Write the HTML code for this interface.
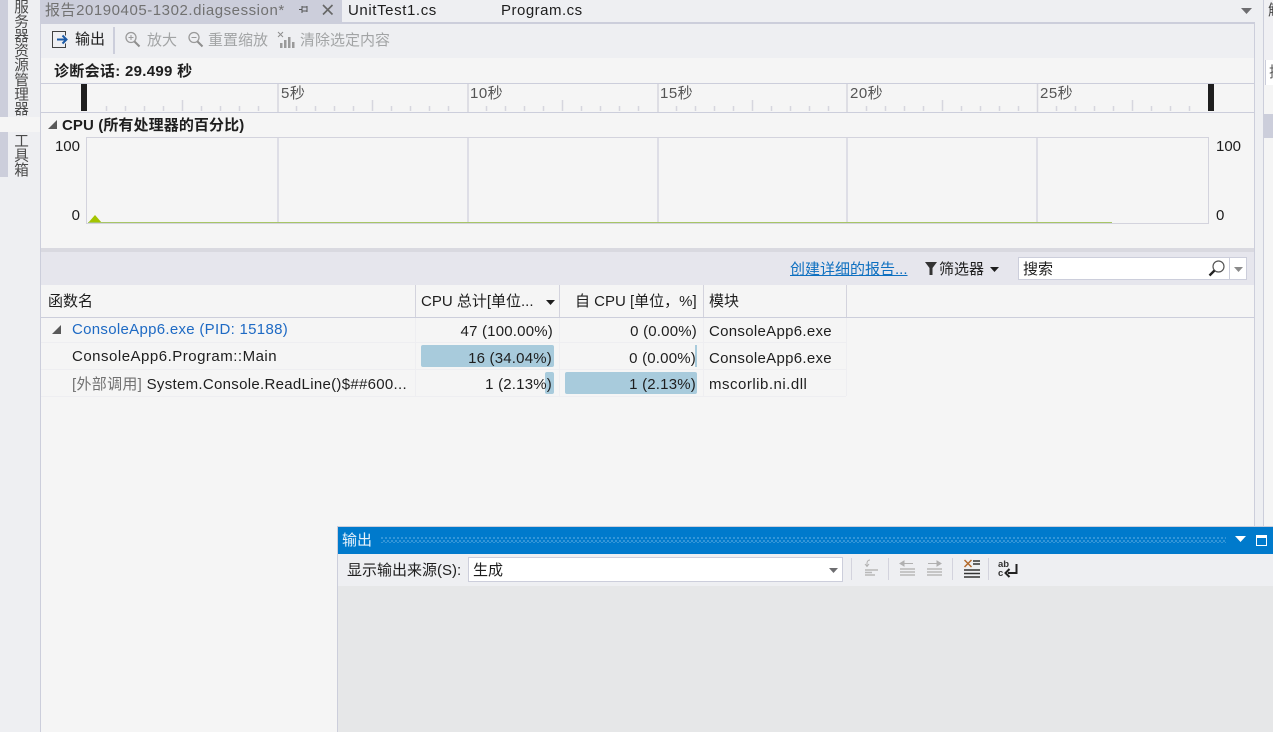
<!DOCTYPE html>
<html><head><meta charset="utf-8">
<style>
html,body{margin:0;padding:0;width:1273px;height:732px;overflow:hidden;background:#f5f5f5}
body{position:relative;font-family:"Liberation Sans","Noto Sans CJK SC",sans-serif;font-size:15px;color:#1e1e1e}
.a{position:absolute}
.t{position:absolute;white-space:nowrap;line-height:20px;height:20px}
.r{text-align:right}
.g{color:#a2a4a5}
.s{letter-spacing:.3px}
.m{letter-spacing:.5px}
.bar{position:absolute;background:#a8cbdc;border-radius:2px}
.v{position:absolute;writing-mode:vertical-rl;white-space:nowrap;color:#4a4a4a;font-size:14.600px;line-height:16px}
.gl{position:absolute;top:138px;width:2px;height:85px;background:#dedee6}
.sp{position:absolute;top:558px;width:1px;height:22px;background:#d3d3dd}
svg{position:absolute;overflow:visible}
</style></head><body>
<!-- left sidebar -->
<div class="a" style="left:0;top:0;width:40px;height:732px;background:#eeeff2"></div>
<div class="a" style="left:0;top:0;width:8px;height:117px;background:#cccedb"></div>
<div class="a" style="left:0;top:132px;width:8px;height:45px;background:#cccedb"></div>
<div class="a" style="left:0;top:117px;width:40px;height:15px;background:#f5f5f5"></div>
<div class="v" style="left:12px;top:-1px">服务器资源管理器</div>
<div class="v" style="left:12px;top:133px">工具箱</div>
<div class="a" style="left:40px;top:0;width:1px;height:732px;background:#cccedb"></div>

<!-- tab row -->
<div class="a" style="left:41px;top:0;width:1222px;height:23px;background:#eeeff2"></div>
<div class="a" style="left:41px;top:0;width:301px;height:23px;background:#cccedb"></div>
<div class="t" style="left:45px;top:1px;color:#717171;letter-spacing:.55px">报告20190405-1302.diagsession*</div>
<svg style="left:298px;top:4px" width="14" height="12"><path d="M4 2v7M4 3h5v4H4M1 5.500h3M9 2v6" stroke="#555" stroke-width="1" fill="none"/></svg>
<svg style="left:322px;top:4px" width="12" height="12"><path d="M1 1l9.500 9.500M10.500 1L1 10.500" stroke="#666" stroke-width="1.600" fill="none"/></svg>
<div class="t" style="left:348px;top:1px;letter-spacing:.6px">UnitTest1.cs</div>
<div class="t" style="left:501px;top:1px;letter-spacing:.5px">Program.cs</div>
<svg style="left:1241px;top:8px" width="11" height="6"><path d="M0 0h11L5.500 6z" fill="#6d6d70"/></svg>

<!-- document body -->
<div class="a" style="left:41px;top:22px;width:1214px;height:2px;background:#cccedb"></div>
<div class="a" style="left:1254px;top:22px;width:1px;height:710px;background:#cccedb"></div>
<div class="a" style="left:1255px;top:0;width:8px;height:732px;background:#eeeff2"></div>
<div class="a" style="left:1263px;top:0;width:1px;height:732px;background:#cccedb"></div>
<div class="a" style="left:1264px;top:0;width:9px;height:732px;background:#f5f5f5"></div>
<div class="a" style="left:1264px;top:0;width:9px;height:60px;background:#f0f0f3"></div>
<div class="a" style="left:1265px;top:60px;width:8px;height:25px;background:#fff;border-left:1px solid #cccedb;box-sizing:border-box"></div>
<div class="a" style="left:1264px;top:114px;width:9px;height:24px;background:#cccedb"></div>
<div class="t" style="left:1268px;top:1px;color:#444">解</div>
<div class="t" style="left:1269px;top:63px;color:#555">搜</div>
<div class="a" style="left:41px;top:24px;width:1213px;height:34px;background:#eeeff2"></div>

<!-- toolbar -->
<svg style="left:52px;top:31px" width="18" height="18"><path d="M13.500 12.500v4H.5v-16h13v4" stroke="#424242" fill="none"/><path d="M5 8.500h9M10.500 4.500l4 4-4 4" stroke="#1c5aa6" stroke-width="2" fill="none"/></svg>
<div class="t" style="left:75px;top:30px">输出</div>
<div class="a" style="left:113px;top:27px;width:2px;height:27px;background:#cccedb"></div>
<svg style="left:124px;top:31px" width="17" height="17"><circle cx="7" cy="6.500" r="5" stroke="#9a9a9a" fill="none" stroke-width="1.300"/><path d="M10.500 10.500l5 5" stroke="#8e8e8e" stroke-width="2"/><path d="M4.500 6.500h5M7 4v5" stroke="#9a9a9a"/></svg>
<div class="t g" style="left:147px;top:31px">放大</div>
<svg style="left:187px;top:31px" width="17" height="17"><circle cx="7" cy="6.500" r="5" stroke="#9a9a9a" fill="none" stroke-width="1.300"/><path d="M10.500 10.500l5 5" stroke="#8e8e8e" stroke-width="2"/><path d="M4.500 6.500h5" stroke="#9a9a9a"/></svg>
<div class="t g" style="left:208px;top:31px">重置缩放</div>
<svg style="left:277px;top:31px" width="18" height="18"><path d="M1 1l5 5M6 1L1 6" stroke="#8e8e8e"/><path d="M3 12h2.500v5H3zM7 9h2.500v8H7zM11 6h2.500v11H11zM15 11h2.500v6H15z" fill="#9a9a9a"/></svg>
<div class="t g" style="left:300px;top:31px">清除选定内容</div>

<!-- session -->
<div class="t s" style="left:54px;top:62px;font-weight:bold">诊断会话: 29.499 秒</div>

<!-- ruler -->
<div class="a" style="left:41px;top:83px;width:1213px;height:1px;background:#cccedb"></div>
<div class="a" style="left:41px;top:112px;width:1213px;height:1px;background:#cccedb"></div>
<svg style="left:0;top:0" width="1273" height="120">
<path stroke="#d6d6de" stroke-width="1.500" fill="none" d="M106.500 106v5M125.500 106v5M144.500 106v5M163.500 106v5M182.500 100v11M201.500 106v5M220.500 106v5M239.500 106v5M258.500 106v5M278 84v28
M296.500 106v5M315.500 106v5M334.500 106v5M353.500 106v5M372.500 100v11M391.500 106v5M410.500 106v5M429.500 106v5M448.500 106v5M468 84v28
M486.500 106v5M505.500 106v5M524.500 106v5M543.500 106v5M562.500 100v11M581.500 106v5M600.500 106v5M619.500 106v5M638.500 106v5M658 84v28
M676.500 106v5M695.500 106v5M714.500 106v5M733.500 106v5M752.500 100v11M771.500 106v5M790.500 106v5M809.500 106v5M828.500 106v5M847 84v28
M866.500 106v5M885.500 106v5M904.500 106v5M923.500 106v5M942.500 100v11M961.500 106v5M980.500 106v5M999.500 106v5M1018.500 106v5M1037.500 84v28
M1056.500 106v5M1075.500 106v5M1094.500 106v5M1113.500 106v5M1132.500 100v11M1151.500 106v5M1170.500 106v5M1189.500 106v5"/>
</svg>
<div class="a" style="left:81px;top:84px;width:6px;height:27px;background:#1e1e1e"></div>
<div class="a" style="left:1208px;top:84px;width:6px;height:27px;background:#1e1e1e"></div>
<div class="t m" style="left:281px;top:84px;color:#555">5秒</div>
<div class="t m" style="left:470px;top:84px;color:#555">10秒</div>
<div class="t m" style="left:660px;top:84px;color:#555">15秒</div>
<div class="t m" style="left:850px;top:84px;color:#555">20秒</div>
<div class="t m" style="left:1040px;top:84px;color:#555">25秒</div>

<!-- CPU chart -->
<svg style="left:48px;top:120px" width="10" height="10"><path d="M9 0v9H0z" fill="#595959"/></svg>
<div class="t" style="left:62px;top:116px;font-weight:bold;letter-spacing:.1px">CPU (所有处理器的百分比)</div>
<div class="t r" style="left:40px;top:137px;width:40px">100</div>
<div class="t r" style="left:40px;top:206px;width:40px">0</div>
<div class="t" style="left:1216px;top:137px">100</div>
<div class="t" style="left:1216px;top:206px">0</div>
<div class="a" style="left:86px;top:137px;width:1123px;height:87px;box-sizing:border-box;border:1px solid #d3d3dd"></div>
<div class="gl" style="left:277px"></div>
<div class="gl" style="left:467px"></div>
<div class="gl" style="left:657px"></div>
<div class="gl" style="left:846px"></div>
<div class="gl" style="left:1036px"></div>
<svg style="left:87px;top:213px" width="20" height="10"><path d="M1 10l7-8 7 8z" fill="#a4c400"/></svg>
<div class="a" style="left:88px;top:222px;width:1024px;height:1px;background:#a7c566"></div>

<!-- splitter / filter bar -->
<div class="a" style="left:41px;top:248px;width:1213px;height:4px;background:#d9d9e0"></div>
<div class="a" style="left:41px;top:252px;width:1213px;height:33px;background:#e6e6ed"></div>
<div class="t" style="left:790px;top:260px;color:#0e70c0;text-decoration:underline">创建详细的报告...</div>
<svg style="left:925px;top:262px" width="12" height="13"><path d="M0 0h12L7.500 6v7h-3V6z" fill="#333"/></svg>
<div class="t" style="left:939px;top:260px">筛选器</div>
<svg style="left:990px;top:267px" width="9" height="5"><path d="M0 0h9L4.500 5z" fill="#1e1e1e"/></svg>
<div class="a" style="left:1018px;top:257px;width:229px;height:23px;box-sizing:border-box;background:#fff;border:1px solid #cccedb"></div>
<div class="a" style="left:1229px;top:258px;width:1px;height:21px;background:#cccedb"></div>
<div class="t" style="left:1023px;top:260px">搜索</div>
<svg style="left:1208px;top:260px" width="18" height="18"><circle cx="10.500" cy="6.500" r="5.500" stroke="#555" fill="none" stroke-width="1.200"/><path d="M6.500 10.500L1.500 15.500" stroke="#222" stroke-width="2.400"/></svg>
<svg style="left:1234px;top:267px" width="9" height="5"><path d="M0 0h9L4.500 5z" fill="#8a8a8a"/></svg>

<!-- table header -->
<div class="a" style="left:415px;top:285px;width:1px;height:32px;background:#d3d3dd"></div>
<div class="a" style="left:559px;top:285px;width:1px;height:32px;background:#d3d3dd"></div>
<div class="a" style="left:703px;top:285px;width:1px;height:32px;background:#d3d3dd"></div>
<div class="a" style="left:846px;top:285px;width:1px;height:32px;background:#d3d3dd"></div>
<div class="a" style="left:41px;top:317px;width:1213px;height:1px;background:#cccedb"></div>
<div class="t" style="left:48px;top:292px">函数名</div>
<div class="t" style="left:421px;top:292px">CPU 总计[单位...</div>
<svg style="left:546px;top:300px" width="9" height="5"><path d="M0 0h9L4.500 5z" fill="#1e1e1e"/></svg>
<div class="t" style="left:575px;top:292px">自 CPU [单位，%]</div>
<div class="t" style="left:709px;top:292px">模块</div>

<!-- rows -->
<div class="a" style="left:41px;top:342px;width:805px;height:1px;background:#eeeef1"></div>
<div class="a" style="left:41px;top:369px;width:805px;height:1px;background:#eeeef1"></div>
<div class="a" style="left:41px;top:396px;width:805px;height:1px;background:#eeeef1"></div>
<div class="a" style="left:415px;top:318px;width:1px;height:78px;background:#eeeef1"></div>
<div class="a" style="left:559px;top:318px;width:1px;height:78px;background:#eeeef1"></div>
<div class="a" style="left:703px;top:318px;width:1px;height:78px;background:#eeeef1"></div>
<div class="a" style="left:846px;top:318px;width:1px;height:78px;background:#eeeef1"></div>

<svg style="left:52px;top:325px" width="10" height="10"><path d="M9 0v9H0z" fill="#595959"/></svg>
<div class="t s" style="left:72px;top:320px;color:#1e6ac4">ConsoleApp6.exe (PID: 15188)</div>
<div class="t m" style="left:72px;top:347px">ConsoleApp6.Program::Main</div>
<div class="t s" style="left:72px;top:375px"><span style="color:#717171">[外部调用]</span> System.Console.ReadLine()$##600...</div>

<div class="bar" style="left:421px;top:345px;width:133px;height:22px"></div>
<div class="bar" style="left:545px;top:372px;width:9px;height:22px"></div>
<div class="a" style="left:695px;top:345px;width:2px;height:22px;background:#a8cbdc"></div>
<div class="bar" style="left:565px;top:372px;width:132px;height:22px"></div>

<div class="t r" style="left:420px;top:322px;width:133px;letter-spacing:.2px">47 (100.00%)</div>
<div class="t r" style="left:420px;top:349px;width:132px;letter-spacing:.2px">16 (34.04%)</div>
<div class="t r" style="left:420px;top:375px;width:132px;letter-spacing:.2px">1 (2.13%)</div>
<div class="t r" style="left:564px;top:322px;width:133px;letter-spacing:.2px">0 (0.00%)</div>
<div class="t r" style="left:564px;top:349px;width:132px;letter-spacing:.2px">0 (0.00%)</div>
<div class="t r" style="left:564px;top:375px;width:132px;letter-spacing:.2px">1 (2.13%)</div>
<div class="t s" style="left:709px;top:322px">ConsoleApp6.exe</div>
<div class="t s" style="left:709px;top:349px">ConsoleApp6.exe</div>
<div class="t m" style="left:709px;top:375px">mscorlib.ni.dll</div>

<!-- output panel -->
<div class="a" style="left:337px;top:526px;width:936px;height:206px;background:#e6e7e8"></div>
<div class="a" style="left:337px;top:526px;width:936px;height:1px;background:#cccedb"></div>
<div class="a" style="left:337px;top:526px;width:1px;height:206px;background:#cccedb"></div>
<div class="a" style="left:338px;top:527px;width:935px;height:27px;background:#007acc"></div>
<div class="t" style="left:342px;top:531px;color:#e8f3fb">输出</div>
<div class="a" style="left:381px;top:537px;width:845px;height:6px;background-image:radial-gradient(circle at 1px 1px,#3c9ada 0.900px,transparent 1.200px),radial-gradient(circle at 3px 4px,#3c9ada 0.900px,transparent 1.200px);background-size:4px 5px"></div>
<svg style="left:1235px;top:536px" width="11" height="6"><path d="M0 0h11L5.500 6z" fill="#fff"/></svg>
<div class="a" style="left:1256px;top:535px;width:11px;height:11px;box-sizing:border-box;border:1px solid #fff;border-top-width:3px;background:#007acc"></div>
<div class="a" style="left:338px;top:554px;width:935px;height:32px;background:#eeeff2"></div>
<div class="t" style="left:347px;top:561px">显示输出来源(S):</div>
<div class="a" style="left:468px;top:557px;width:375px;height:25px;box-sizing:border-box;background:#fff;border:1px solid #cccedb"></div>
<div class="t" style="left:473px;top:561px">生成</div>
<svg style="left:829px;top:568px" width="9" height="5"><path d="M0 0h9L4.500 5z" fill="#6d6d70"/></svg>
<div class="sp" style="left:851px"></div>
<div class="sp" style="left:888px"></div>
<div class="sp" style="left:952px"></div>
<div class="sp" style="left:988px"></div>
<svg style="left:862px;top:559px" width="18" height="20"><path d="M8 1a3 3 0 0 0-3 3v3M3 5l2 2.500L7 5" stroke="#b0b0b0" fill="none"/><path d="M3 11h13M3 13.500h7M3 16h10" stroke="#b8b8b8" stroke-width="1.600"/></svg>
<svg style="left:899px;top:560px" width="17" height="17"><path d="M5 6L1 3.500 5 1zM5 3.500h9" stroke="#b0b0b0" fill="#b0b0b0"/><path d="M1 9h15M1 12h15M1 15h15" stroke="#b8b8b8" stroke-width="1.500"/></svg>
<svg style="left:926px;top:560px" width="17" height="17"><path d="M11 6l4-2.500L11 1zM2 3.500h9" stroke="#b0b0b0" fill="#b0b0b0"/><path d="M1 9h15M1 12h15M1 15h15" stroke="#b8b8b8" stroke-width="1.500"/></svg>
<svg style="left:963px;top:559px" width="18" height="20"><path d="M1.500 1l7 7M8.500 1l-7 7" stroke="#b36a2c" stroke-width="1.500"/><path d="M10 2h7M10 5h7M1 11h16M1 14.500h16M1 18h16" stroke="#333" stroke-width="1.600"/></svg>
<div class="t" style="left:998px;top:560px;font-size:9.500px;line-height:9px;height:9px;color:#333;font-weight:bold">ab</div>
<div class="t" style="left:998px;top:569px;font-size:9.500px;line-height:9px;height:9px;color:#333;font-weight:bold">c</div>
<svg style="left:1004px;top:562px" width="14" height="16"><path d="M12.500 2v9H4" stroke="#222" stroke-width="2" fill="none"/><path d="M5.500 7l-4 4 4 4" stroke="#222" stroke-width="2" fill="none"/></svg>
</body></html>
